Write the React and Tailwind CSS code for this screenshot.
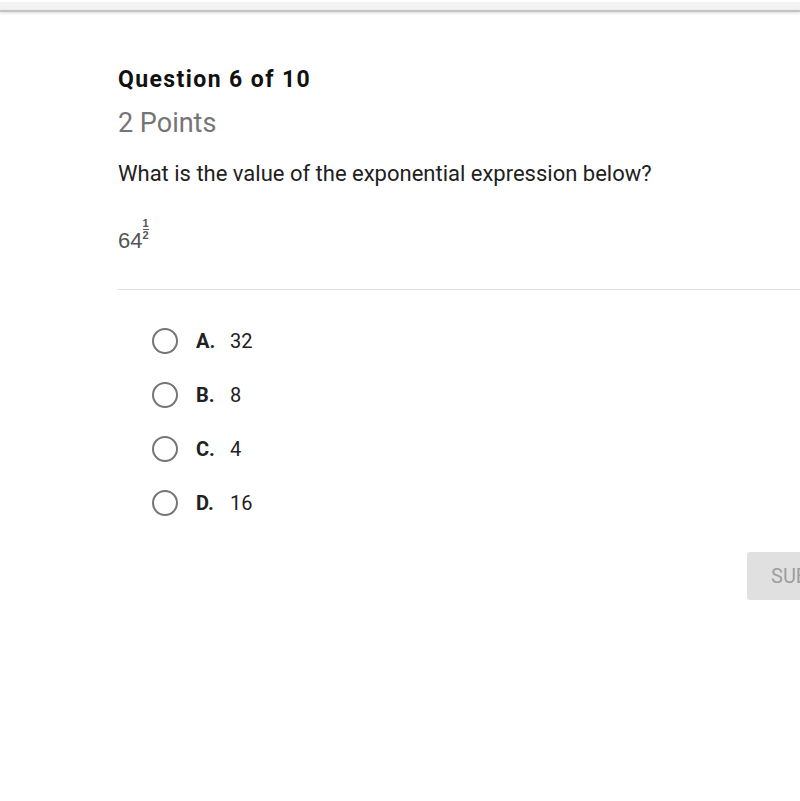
import React from 'react';

const options = [
  { letter: 'A', text: '32' },
  { letter: 'B', text: '8' },
  { letter: 'C', text: '4' },
  { letter: 'D', text: '16' },
];

function Radio() {
  return <span className="w-[26px] h-[26px] rounded-full border-[2.5px] border-[#757575] shrink-0" />;
}

export default function App() {
  return (
    <div className="w-[800px] h-[801px] bg-white overflow-hidden font-['Roboto',sans-serif] text-[#212121]">
      <div className="h-[2px] bg-white" />
      <div className="h-[8px] bg-[#f4f4f4]" />
      <div className="h-[2px] bg-[#c4c4c4] shadow-[0_1px_3px_rgba(0,0,0,0.18)]" />

      <div className="pl-[118px]">
        <h1 className="mt-[54px] text-[23px] leading-[28px] font-bold text-[#111] tracking-[1.4px]">Question 6 of 10</h1>
        <div className="mt-[13px] text-[27px] leading-[32px] text-[#757575]">2 Points</div>
        <p className="mt-[21px] text-[22px] leading-[28px] text-[#212121]">What is the value of the exponential expression below?</p>

        <div className="mt-[30px] h-[35px] flex items-end font-['Liberation_Sans',sans-serif] text-[#555]">
          <span className="text-[22px] leading-[24px]">64</span>
          <span className="flex flex-col items-center mb-[13px] text-[11px] leading-[9px] font-bold">
            <span>1</span>
            <span className="w-[6px] h-[1px] bg-[#555] my-[1px]" />
            <span>2</span>
          </span>
        </div>

        <div className="mt-[36px] h-[1px] bg-[#e0e0e0]" />

        <div className="mt-[38px] pl-[34px] flex flex-col gap-[28px]">
          {options.map((o) => (
            <div key={o.letter} className="flex items-center h-[26px]">
              <Radio />
              <span className="ml-[18px] text-[20px] font-bold text-[#212121] w-[34px]">{o.letter}.</span>
              <span className="text-[20px] text-[#212121]">{o.text}</span>
            </div>
          ))}
        </div>

        <div className="mt-[36px] flex justify-end">
          <button className="w-[53px] h-[48px] bg-[#e0e0e0] rounded-l-[3px] pl-[24px] text-left text-[20px] text-[#9e9e9e] overflow-hidden whitespace-nowrap">
            SUBMIT
          </button>
        </div>
      </div>
    </div>
  );
}
